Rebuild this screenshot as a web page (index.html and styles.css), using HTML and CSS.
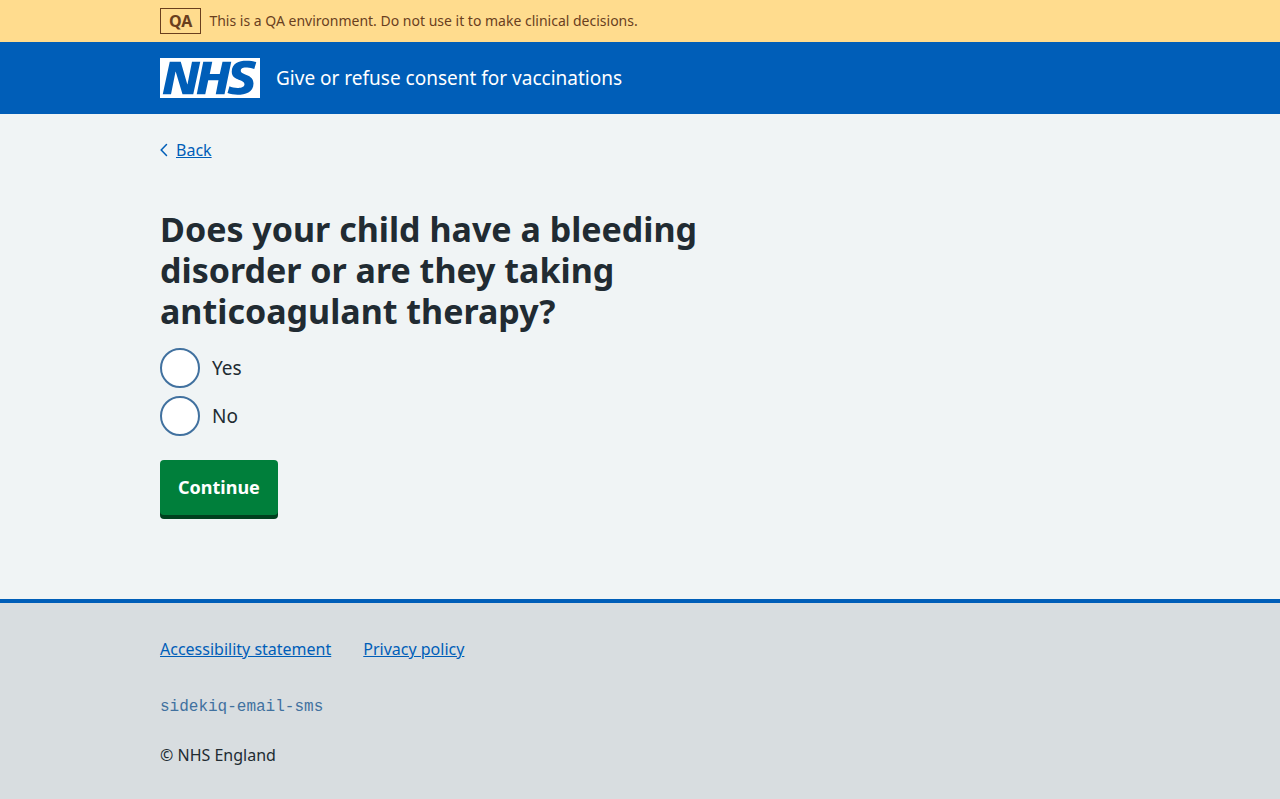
FILE: index.html
```html
<!DOCTYPE html>
<html lang="en">
<head>
  <meta charset="utf-8">
  <meta name="viewport" content="width=device-width, initial-scale=1">
  <title>Give or refuse consent for vaccinations</title>
  <link rel="stylesheet" href="styles.css">
</head>
<body>
  <div class="environment">
    <div class="container environment-inner">
      <strong class="environment-tag">QA</strong>
      <span>This is a QA environment. Do not use it to make clinical decisions.</span>
    </div>
  </div>

  <header class="header">
    <div class="container header-inner">
      <svg class="logo" viewBox="0 0 200 80" role="img" aria-label="NHS">
        <path fill="currentColor" d="M200 0v80H0V0h200Zm-27.5 5.5c-14.5 0-29 5-29 22 0 10.2 7.7 13.5 14.7 16.3l.7.3c5.4 2 10.1 3.9 10.1 8.4 0 6.5-8.5 7.5-14 7.5s-12.5-1.5-16-3.5L135 70c5.5 2 13.5 3.5 20 3.5 15.5 0 32-4.5 32-22.5 0-19.5-25.5-16.5-25.5-25.5 0-5.5 5.5-6.5 12.5-6.5a35 35 0 0 1 14.5 3l4-13.5c-4.5-2-12-3-20-3Zm-131 2h-22l-14 65H22l9-45h.5l13.5 45h21.5l14-65H64l-9 45h-.5l-13-45Zm63 0h-18l-13 65h17l6-28H117l-5.5 28H129l13.5-65H125L119.5 32h-20l5-24.5Z"/>
      </svg>
      <span class="service-name">Give or refuse consent for vaccinations</span>
    </div>
  </header>

  <div class="container content">
    <nav>
      <a class="back-link" href="#"><svg class="chevron" viewBox="0 0 8 14" aria-hidden="true"><path d="M6.5 1.5 1.2 7l5.3 5.5" fill="none" stroke="currentColor" stroke-width="1.5" stroke-linecap="round"/></svg><span class="back-text">Back</span></a>
    </nav>
    <main class="main">
      <form>
        <fieldset class="fieldset">
          <legend class="legend"><h1 class="heading">Does your child have a bleeding disorder or are they taking anticoagulant therapy?</h1></legend>
          <div class="radios">
            <div class="radio-item">
              <input class="radio" type="radio" name="answer" id="answer-yes" value="yes">
              <label class="radio-label" for="answer-yes">Yes</label>
            </div>
            <div class="radio-item">
              <input class="radio" type="radio" name="answer" id="answer-no" value="no">
              <label class="radio-label" for="answer-no">No</label>
            </div>
          </div>
        </fieldset>
        <button class="button" type="submit">Continue</button>
      </form>
    </main>
  </div>

  <footer class="footer">
    <div class="container">
      <nav class="footer-links">
        <a href="#">Accessibility statement</a>
        <a href="#">Privacy policy</a>
      </nav>
      <code class="version">sidekiq-email-sms</code>
      <p class="copyright">© NHS England</p>
    </div>
  </footer>
</body>
</html>
```

FILE: styles.css
```css
*,
*::before,
*::after {
  box-sizing: border-box;
}

body {
  display: flex;
  flex-direction: column;
  min-height: 100vh;
  margin: 0;
  background: #f0f4f5;
  color: #212b32;
  font-family: "Noto Sans", "Open Sans", Arial, sans-serif;
  font-size: 16px;
  line-height: 24px;
}

a {
  color: #005eb8;
}

.container {
  width: calc(100% - 64px);
  max-width: 960px;
  margin: 0 auto;
}

.environment {
  padding: 8px 0;
  background: #ffdc8e;
  color: #6a3f1e;
  font-size: 14px;
}

.environment-inner {
  display: flex;
  align-items: center;
  gap: 8px;
}

.environment-tag {
  padding: 0 8px;
  border: 1px solid currentColor;
  font-size: 16px;
}

.header {
  padding: 16px 0;
  background: #005eb8;
  color: #fff;
}

.header-inner {
  display: flex;
  align-items: center;
  gap: 16px;
}

.logo {
  width: 100px;
  height: 40px;
}

.service-name {
  font-size: 19px;
}

.content {
  padding: 24px 0 84px;
}

.back-link {
  display: flex;
  align-items: center;
  gap: 8px;
  width: fit-content;
  text-decoration: none;
}

.back-text {
  text-decoration: underline;
}

.chevron {
  width: 8px;
  height: 14px;
}

.main {
  padding-top: 47px;
}

.fieldset {
  min-width: 0;
  margin: 0 0 24px;
  padding: 0;
  border: 0;
}

.legend {
  padding: 0;
}

.heading {
  max-width: 608px;
  margin: 0 0 16px;
  font-size: 34px;
  font-weight: 700;
  line-height: 41px;
}

.radios {
  display: grid;
  gap: 8px;
}

.radio-item {
  display: flex;
  align-items: center;
  gap: 12px;
}

.radio {
  width: 40px;
  height: 40px;
  margin: 0;
  border: 2px solid #41719f;
  border-radius: 50%;
  appearance: none;
  background: #fff;
}

.radio:checked {
  background: radial-gradient(#212b32 10px, #fff 11px);
}

.radio-label {
  font-size: 19px;
}

.button {
  display: block;
  padding: 14px 18px;
  border: 0;
  border-radius: 4px;
  background: #007f3b;
  box-shadow: 0 4px 0 #00401e;
  color: #fff;
  font-family: inherit;
  font-size: 18px;
  font-weight: 700;
  line-height: 27px;
}

.footer {
  flex-grow: 1;
  padding: 34px 0 30px;
  border-top: 4px solid #005eb8;
  background: #d8dde0;
}

.footer-links {
  display: flex;
  flex-wrap: wrap;
  gap: 32px;
  margin-bottom: 34px;
}

.version {
  display: block;
  margin-bottom: 24px;
  color: #41719f;
  font-family: "Liberation Mono", monospace;
  font-size: 16px;
}

.copyright {
  margin: 0;
}
```
